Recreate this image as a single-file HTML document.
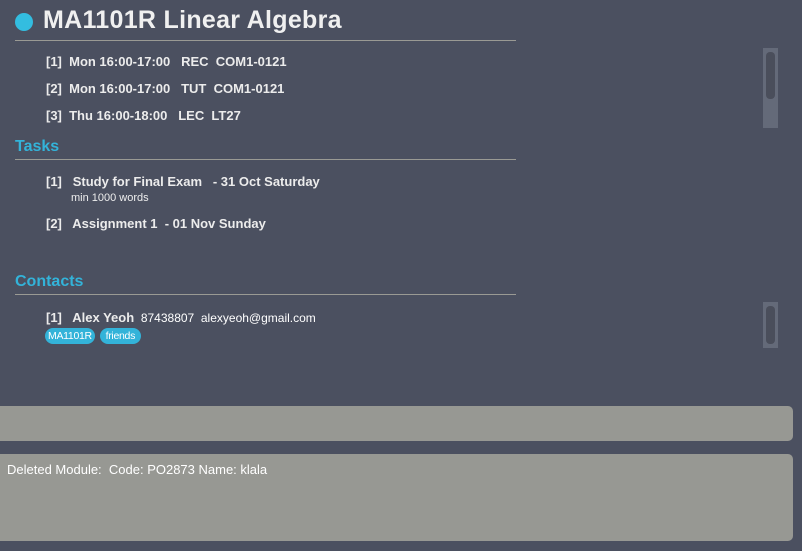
<!DOCTYPE html>
<html><head><style>
body{margin:0;width:802px;height:551px;background:#4b5060;font-family:"Liberation Sans",sans-serif;position:relative;overflow:hidden;color:#fff}
.a{position:absolute;white-space:nowrap}
.b{font-weight:bold;font-size:13px;color:#ececec}
.hr{position:absolute;left:15px;width:501px;height:1px;background:#9a9a94}
.h{font-weight:bold;font-size:16px;color:#33b3d9}
.tag{display:inline-block;background:#33b3d9;color:#fff;border-radius:8px;padding:2px 3px;font-size:10.5px;letter-spacing:-0.3px}
.sb{position:absolute;left:763px;width:15px;background:#646a79}
.sb div{position:absolute;left:3px;width:9px;background:#4a4e5b;border-radius:4px}
</style></head><body>
<div class="a" style="left:15px;top:13px;width:18px;height:18px;border-radius:50%;background:#33bde0"></div>
<div class="a" style="left:43px;top:6px;font-size:25px;font-weight:bold;color:#f0f0f0;letter-spacing:0.3px">MA1101R Linear Algebra</div>
<div class="hr" style="top:40px"></div>
<div class="a b" style="left:46px;top:54px">[1]&nbsp; Mon 16:00-17:00 &nbsp; REC&nbsp; COM1-0121</div>
<div class="a b" style="left:46px;top:81px">[2]&nbsp; Mon 16:00-17:00 &nbsp; TUT&nbsp; COM1-0121</div>
<div class="a b" style="left:46px;top:108px">[3]&nbsp; Thu 16:00-18:00 &nbsp; LEC&nbsp; LT27</div>
<div class="a h" style="left:15px;top:138px">Tasks</div>
<div class="hr" style="top:159px"></div>
<div class="a b" style="left:46px;top:174px">[1]&nbsp;&nbsp; Study for Final Exam &nbsp; - 31 Oct Saturday</div>
<div class="a" style="left:71px;top:192px;font-size:11px;color:#eee">min 1000 words</div>
<div class="a b" style="left:46px;top:216px">[2]&nbsp;&nbsp; Assignment 1 &nbsp;- 01 Nov Sunday</div>
<div class="a h" style="left:15px;top:273px">Contacts</div>
<div class="hr" style="top:294px"></div>
<div class="a" style="left:46px;top:310px;font-size:12px"><b style="font-size:13px;color:#ececec">[1]&nbsp;&nbsp; Alex Yeoh</b>&nbsp; 87438807&nbsp; alexyeoh@gmail.com</div>
<div class="a" style="left:45px;top:326px"><span class="tag">MA1101R</span></div>
<div class="a" style="left:100px;top:326px"><span class="tag">&nbsp;friends&nbsp;</span></div>
<div class="sb" style="top:48px;height:80px"><div style="top:4px;height:47px"></div></div>
<div class="sb" style="top:302px;height:46px"><div style="top:4px;height:38px"></div></div>
<div class="a" style="left:0;top:406px;width:793px;height:35px;background:#979893;border-radius:0 5px 5px 0"></div>
<div class="a" style="left:0;top:454px;width:793px;height:87px;background:#979893;border-radius:0 5px 5px 0"></div>
<div class="a" style="left:7px;top:462px;font-size:13px;color:#fff">Deleted Module:&nbsp; Code: PO2873 Name: klala</div>
</body></html>
